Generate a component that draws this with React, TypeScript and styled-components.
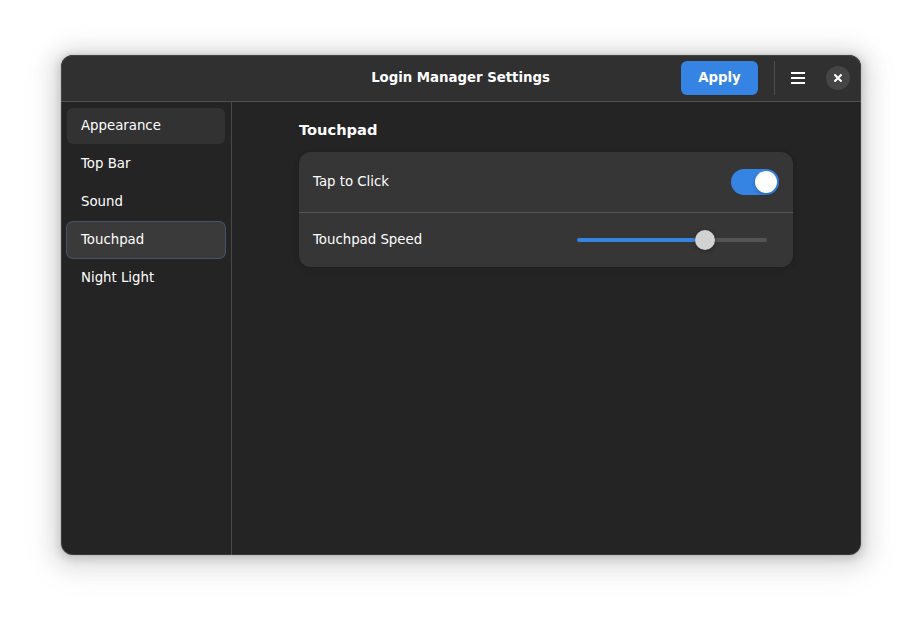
import React from "react";
import styled, { createGlobalStyle } from "styled-components";

const Global = createGlobalStyle`
  * { box-sizing: border-box; }
  html, body { margin: 0; background: #fff; }
  body {
    font-family: "DejaVu Sans", sans-serif;
    font-size: 13.333px;
    letter-spacing: -0.02px;
    color: #fff;
    overflow: hidden;
  }
  button { font: inherit; letter-spacing: inherit; color: inherit; border: 0; padding: 0; background: none; }
`;

const Desktop = styled.div`
  width: 922px;
  height: 622px;
  padding: 55px 61px;
`;

const Window = styled.div`
  width: 800px;
  height: 500px;
  border-radius: 12px;
  overflow: hidden;
  display: flex;
  flex-direction: column;
  background: #242424;
  position: relative;
  box-shadow: 0 2px 8px 2px rgba(0, 0, 0, 0.14), 0 3px 20px 10px rgba(0, 0, 0, 0.09),
    0 6px 32px 16px rgba(0, 0, 0, 0.04), 0 0 0 1px rgba(0, 0, 0, 0.05);

  &::after {
    content: "";
    position: absolute;
    inset: 0;
    border-radius: 12px;
    box-shadow: inset 0 0 0 1px rgba(255, 255, 255, 0.1);
    pointer-events: none;
  }
`;

const Header = styled.header`
  height: 47px;
  flex: none;
  display: grid;
  grid-template-columns: 1fr auto 1fr;
  align-items: center;
  background: #303030;
  border-bottom: 1px solid #515151;
  padding: 0 11px;
`;

const Title = styled.h1`
  grid-column: 2;
  margin: 0;
  font-size: 13.333px;
  line-height: 16px;
  font-weight: 700;
  letter-spacing: -0.03px;
  padding: 0 1px 1px 0;
`;

const Actions = styled.div`
  display: flex;
  align-items: center;
  justify-content: flex-end;
`;

const ApplyButton = styled.button`
  width: 77px;
  height: 34px;
  border-radius: 6px;
  background: #3584e4;
  font-weight: 700;
  padding-bottom: 1px;
`;

const Separator = styled.div`
  width: 1px;
  height: 34px;
  margin-left: 16px;
  background: #4d4d4d;
`;

const MenuButton = styled.button`
  width: 34px;
  height: 34px;
  margin: 0 11px 0 6px;
  display: grid;
  place-items: center;
`;

const CloseButton = styled.button`
  width: 24px;
  height: 24px;
  border-radius: 50%;
  background: #454545;
  display: grid;
  place-items: center;
`;

const Body = styled.div`
  flex: 1;
  display: flex;
`;

const Sidebar = styled.nav`
  width: 171px;
  border-right: 1px solid #494949;
  padding: 6px;
  display: flex;
  flex-direction: column;
  gap: 2px;
`;

const NavItem = styled.button<{ $state?: "hover" | "selected" }>`
  height: 36px;
  padding: 0 14px 1px;
  border-radius: 6px;
  text-align: left;
  background: ${(p) => (p.$state === "selected" ? "#3a3a3a" : p.$state === "hover" ? "#323232" : "transparent")};
  box-shadow: ${(p) => (p.$state === "selected" ? "0 0 0 1px #41546e" : "none")};
`;

const Content = styled.main`
  flex: 1;
  padding: 19px 68px 0 67px;
`;

const Heading = styled.h2`
  margin: 0 0 13px;
  font-size: 14.667px;
  line-height: 18px;
  font-weight: 700;
`;

const Card = styled.section`
  height: 115px;
  border-radius: 12px;
  background: #363636;
  box-shadow: 0 1px 3px 1px rgba(0, 0, 0, 0.07), 0 2px 6px 2px rgba(0, 0, 0, 0.03);
`;

const Row = styled.div<{ $height: number; $divided?: boolean }>`
  height: ${(p) => p.$height}px;
  padding: 0 14px;
  display: flex;
  align-items: center;
  justify-content: space-between;
  border-bottom: ${(p) => (p.$divided ? "1px solid #565656" : "0")};
`;

const Label = styled.span`
  padding-bottom: 1px;
`;

const Switch = styled.button`
  width: 48px;
  height: 26px;
  border-radius: 13px;
  background: #3584e4;
  padding: 2px;
  display: flex;
  justify-content: flex-end;
`;

const SwitchKnob = styled.span`
  width: 22px;
  height: 22px;
  border-radius: 50%;
  background: #fff;
  box-shadow: 0 2px 4px rgba(0, 0, 0, 0.2);
`;

const Slider = styled.div`
  width: 190px;
  height: 20px;
  margin-right: 12px;
  display: flex;
  align-items: center;
`;

const Filled = styled.div`
  width: 118px;
  height: 4px;
  border-radius: 2px 0 0 2px;
  background: #3584e4;
`;

const Remaining = styled.div`
  flex: 1;
  height: 4px;
  border-radius: 0 2px 2px 0;
  background: #545454;
`;

const SliderKnob = styled.div`
  width: 20px;
  height: 20px;
  border-radius: 50%;
  background: #d2d2d2;
  box-shadow: 0 1px 4px rgba(0, 0, 0, 0.3);
  z-index: 1;
`;

const sections: { name: string; state?: "hover" | "selected" }[] = [
  { name: "Appearance", state: "hover" },
  { name: "Top Bar" },
  { name: "Sound" },
  { name: "Touchpad", state: "selected" },
  { name: "Night Light" },
];

export default function App() {
  return (
    <>
      <Global />
      <Desktop>
        <Window>
          <Header>
            <Title>Login Manager Settings</Title>
            <Actions>
              <ApplyButton>Apply</ApplyButton>
              <Separator />
              <MenuButton aria-label="Menu">
                <svg width="14" height="12" viewBox="0 0 14 12" fill="#fff">
                  <path d="M0 0h14v2H0zM0 5h14v2H0zM0 10h14v2H0z" />
                </svg>
              </MenuButton>
              <CloseButton aria-label="Close">
                <svg width="8" height="8" viewBox="0 0 8 8" stroke="#fff" strokeWidth="2.1">
                  <path d="M0.4 0.4l7.2 7.2M7.6 0.4l-7.2 7.2" />
                </svg>
              </CloseButton>
            </Actions>
          </Header>
          <Body>
            <Sidebar>
              {sections.map((s) => (
                <NavItem key={s.name} $state={s.state}>
                  {s.name}
                </NavItem>
              ))}
            </Sidebar>
            <Content>
              <Heading>Touchpad</Heading>
              <Card>
                <Row $height={61} $divided>
                  <Label>Tap to Click</Label>
                  <Switch role="switch" aria-checked="true" aria-label="Tap to Click">
                    <SwitchKnob />
                  </Switch>
                </Row>
                <Row $height={54}>
                  <Label>Touchpad Speed</Label>
                  <Slider>
                    <Filled />
                    <SliderKnob />
                    <Remaining />
                  </Slider>
                </Row>
              </Card>
            </Content>
          </Body>
        </Window>
      </Desktop>
    </>
  );
}
